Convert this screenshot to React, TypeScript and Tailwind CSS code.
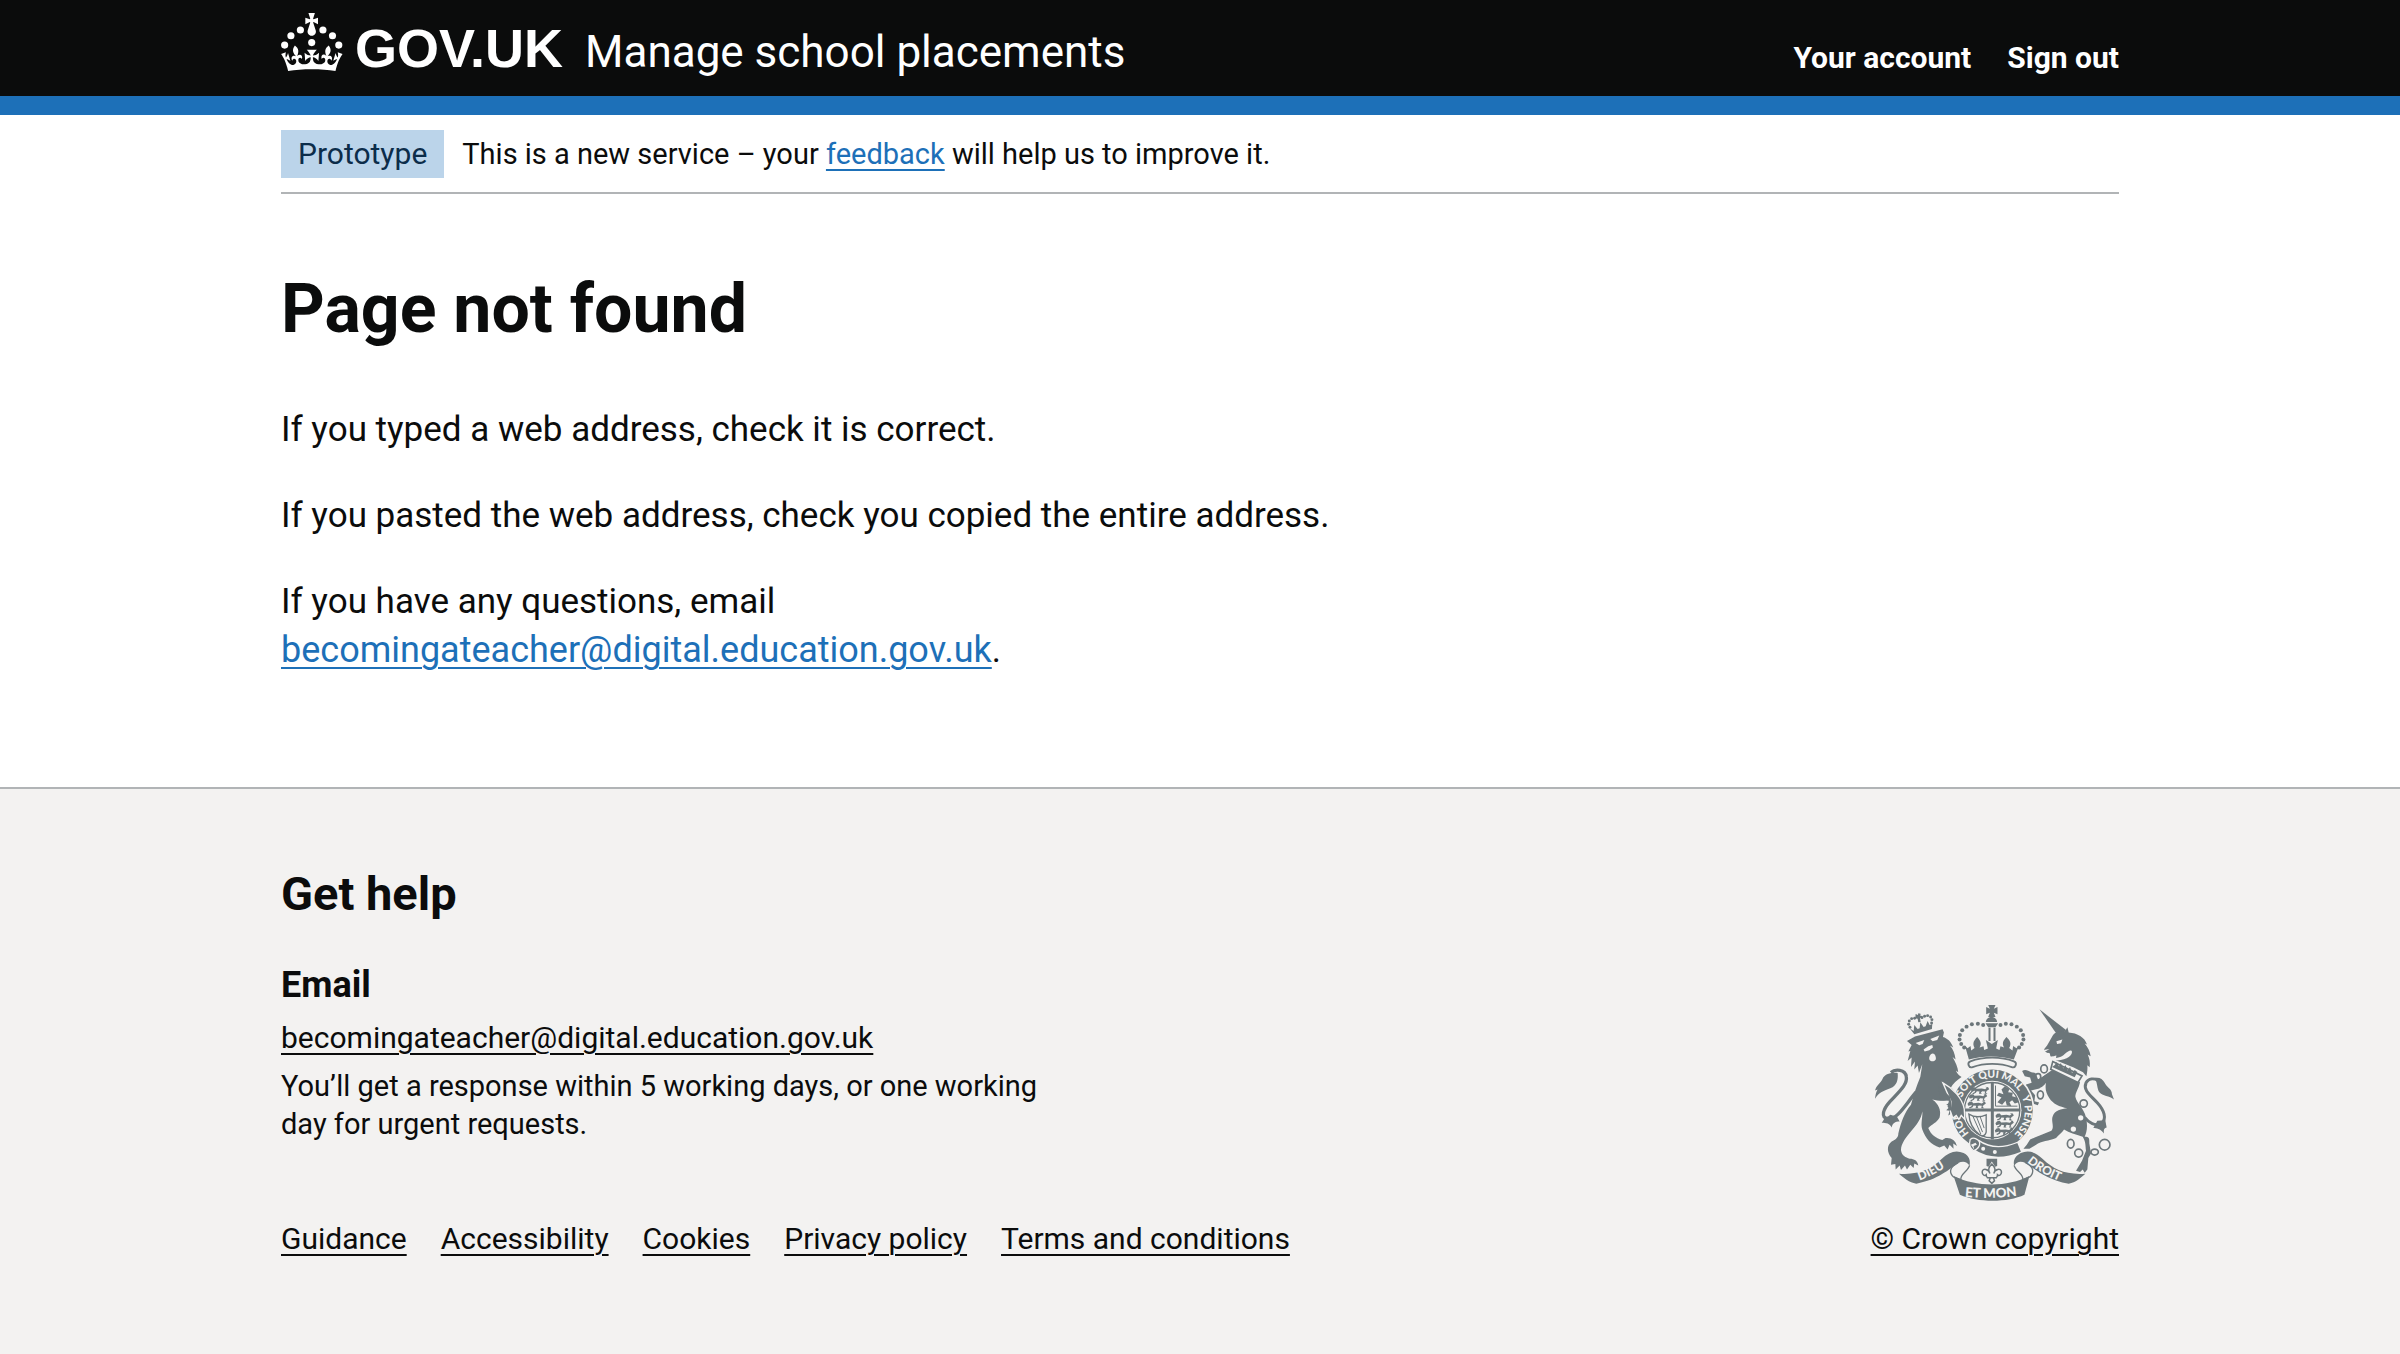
import type { ReactNode } from 'react';

const EMAIL = 'becomingateacher@digital.education.gov.uk';

const accountLinks = ['Your account', 'Sign out'];
const metaLinks = ['Guidance', 'Accessibility', 'Cookies', 'Privacy policy', 'Terms and conditions'];

function Container({ className = '', children }: { className?: string; children: ReactNode }) {
  return <div className={`mx-auto w-full max-w-[1838px] ${className}`}>{children}</div>;
}

function Crown() {
  return (
    <svg viewBox="0 0 64 60" className="h-[58px] w-[62px]" fill="currentColor" aria-hidden="true">
      <circle cx="20" cy="17.6" r="3.7" />
      <circle cx="10.2" cy="23.5" r="3.7" />
      <circle cx="3.7" cy="33.2" r="3.7" />
      <circle cx="31.7" cy="30.6" r="3.7" />
      <circle cx="43.3" cy="17.6" r="3.7" />
      <circle cx="53.2" cy="23.5" r="3.7" />
      <circle cx="59.7" cy="33.2" r="3.7" />
      <path d="M33.1,9.8c.2-.1.3-.3.5-.5l4.6,2.4v-6.8l-4.6,1.5c-.1-.2-.3-.3-.5-.5l1.9-5.9h-6.7l1.9,5.9c-.2.1-.3.3-.5.5l-4.6-1.5v6.8l4.6-2.4c.1.2.3.3.5.5l-2.6,8c-.9,2.8,1.2,5.7,4.1,5.7h0c3,0,5.1-2.9,4.1-5.7l-2.6-8ZM37,37.9s-3.4,3.8-4.1,6.1c2.2,0,4.2-.5,6.4-2.8l-.7,8.5c-2-2.8-4.4-4.1-5.7-3.8.1,3.1.5,6.7,5.8,7.2,3.7.3,6.7-1.5,7-3.8.4-2.6-2-4.3-3.7-1.6-1.4-4.5,2.4-6.1,4.9-3.2-1.9-4.5-1.8-7.7,2.4-10.9,3,4,2.6,7.3-1.2,11.1,2.4-1.3,6.2,0,4,4.6-1.2-2.8-3.7-2.2-4.2.2-.3,1.7.7,3.7,3,4.2,1.9.3,4.7-.9,7-5.9-1.3,0-2.4.7-3.9,1.7l2.4-8c.6,2.3,1.4,3.7,2.2,4.5.6-1.6.5-2.8,0-5.3l5,1.8c-2.6,3.6-5.2,8.7-7.3,17.5-7.4-1.1-15.7-1.7-24.5-1.7h0c-8.8,0-17.1.6-24.5,1.7-2.1-8.9-4.7-13.9-7.3-17.5l5-1.8c-.5,2.5-.6,3.7,0,5.3.8-.8,1.6-2.3,2.2-4.5l2.4,8c-1.5-1-2.6-1.7-3.9-1.7,2.3,5,5.2,6.2,7,5.9,2.3-.4,3.3-2.4,3-4.2-.5-2.4-3-3.1-4.2-.2-2.2-4.6,1.6-6,4-4.6-3.7-3.7-4.2-7.1-1.2-11.1,4.2,3.2,4.3,6.4,2.4,10.9,2.5-2.8,6.3-1.3,4.9,3.2-1.8-2.7-4.1-1-3.7,1.6.3,2.3,3.3,4.1,7,3.8,5.4-.5,5.7-4.2,5.8-7.2-1.3-.2-3.7,1-5.7,3.8l-.7-8.5c2.2,2.3,4.2,2.7,6.4,2.8-.7-2.3-4.1-6.1-4.1-6.1h10.6Z" />
    </svg>
  );
}

const crownPearls = [
  [397, 106], [381, 102], [363, 104], [347, 111], [334, 122], [327, 136], [326, 150], [331, 163], [340, 174],
  [449, 106], [465, 102], [482, 104], [498, 111], [510, 122], [517, 136], [518, 150], [513, 163], [505, 174],
];
const lionCrownPearls = [
  [173, 104], [175, 94], [182, 87], [191, 86], [213, 84], [221, 80], [230, 78], [239, 82], [243, 90], [242, 100],
  [177, 113],
];

/* One walking lion of the royal shield, drawn in a 60 x 20 box. */
function Passant({ x, y }: { x: number; y: number }) {
  return (
    <path
      transform={`translate(${x} ${y})`}
      d="M2 8l5-6 8-1 4 5 16-1 10 2 5-4-5-3 9 1 3 6-7 5-3 5 5 4h-9l2-7-9-1-4 4 3 4h-9l2-7-8-1-3 5-8 4-3-3 7-3 2-5-5 2-6 1z"
    />
  );
}

function RoyalArms() {
  return (
    <svg viewBox="70 43 722 592" className="h-[197px] w-[241px] text-[#6c767a]" fill="currentColor" aria-hidden="true">
      <defs>
        <path id="garter-top" d="M326 362a98 98 0 0 1 196 0a98 98 0 0 1 -196 0" />
        <path id="garter-left" d="M355 431a98 98 0 0 1 -29 -69" />
        <path id="scroll-left" d="M202 574Q260 556 316 508" />
        <path id="scroll-middle" d="M334 621Q424 632 520 616" />
        <path id="scroll-right" d="M526 516Q568 554 650 584" />
      </defs>

      {/* lion's crown */}
      {lionCrownPearls.map(([x, y]) => <circle key={`${x}-${y}`} cx={x} cy={y} r="4.4" />)}
      <path d="M194 73l7 3 1-5 7 1-1 6 7 1-2 6-6-1 2 13-7 1-2-11-7-1z" />
      <path d="M176 116L188 124L190 106L200 118L206 116L208 98L218 112L224 110L230 94L236 106L244 103L243 118L190 134Z" />

      {/* lion */}
      <path d="M168 154L192 141L275 119L279 129L276 142C290 146 301 156 307 174L297 168C306 178 312 192 314 210L305 202C314 218 321 232 322 248L315 243C318 252 324 258 332 262C318 272 306 282 300 294C312 304 330 336 336 362L338 388L330 378L324 388L318 376L308 386L302 372L292 378L296 364L286 362L298 350L286 346L298 338L292 330C280 336 262 334 244 330C262 342 272 362 266 384C258 400 242 404 232 416C240 436 254 446 274 452L284 446C300 444 314 452 318 470L307 462L308 478L296 466L290 480L280 468L266 474C240 466 224 448 214 420C208 404 216 380 214 366C208 412 152 440 150 482C152 500 164 504 176 508C190 508 200 514 202 528L190 522L188 536L178 526L168 540L162 528L150 542L146 528L134 540L133 524L120 526L122 506C108 490 106 468 122 456C134 450 142 444 142 432C150 400 160 370 180 346C188 316 196 290 208 262L214 224L204 250L200 228L190 240L192 216L180 232L182 204L170 214L178 184L172 186L182 166Z" />
      <path
        d="M195 308C160 350 140 388 112 389c-26-4-14-32 4-52 30-32 54-52 50-76-3-22-34-24-46-12"
        fill="none" stroke="currentColor" strokeWidth="10"
      />
      <path d="M140 250c2 20-2 38-22 46-22 8-36 14-46 32 2-16 4-22 8-28l-8 3c4-16 16-22 22-34 8-18 28-20 46-19z" />
      <path d="M118 376c-8 8-14 6-19 2 2 10-1 14-7 22 14 0 24 2 30 14 2-12 10-18 24-18l-8-14z" />
      <g fill="#f3f2f1">
        <path d="M194 160l26-9-5 12-10 4zM238 148l27-10-6 13-14 4z" />
        <path d="M218 180l14-10 12-4 2 8-11 8-14 4zM236 200c3-10 14-12 17-2 4 10 2 16-6 17-9 1-15-5-11-15z" />
      </g>

      {/* unicorn */}
      <path d="M566 59L647 122L624 142Z" />
      <path d="M625 126l18-1c2-4 5-8 7-12l4 16c26 2 48 14 55 36l-7-3c10 12 16 24 18 38l-9-5c6 14 8 24 6 38l-7-6c1 10 0 20-3 33l-10-12-28-14-54-22 2-14c-8 2-13 4-18 2l-2-9c-8-1-14-2-17-12l9-11 18-32c6-6 10-8 18-10z" />
      <path d="M608 239l58 26 22 13c-4 20-14 30-14 44 4 20 26 34 32 62 6 28 2 44-4 58 14 0 14 4 14 20l5 30-8 14-3 34-8 10-6-10-8 8-12-4 18-30 12-30c-2-14 0-26-10-42-22-8-40-12-56-22-6 10-16 16-24 26-20 8-46 10-60 20l-20 12h-18l10-12 10-16 14-6 50-20c10-12-2-30 4-44 6-18 26-22 44-24-24-4-44-14-54-30-10-14-14-30-10-46-8 12-14 12-20 17l-25 6 12 14-2 18 14 4-4 8-18-6-12-14-13-28 8-14 36-12c14-14 34-26 46-34z" />
      <path d="M514 244c8-6 18-2 28 4l12 2 8 20 30-18 6 18-38 22-16-8-6-20-16-4z" />
      <path
        d="M702 384C714 400 734 412 752 402c18-14 8-40-12-62-20-22-44-38-34-60 8-14 24-14 36-8"
        fill="none" stroke="currentColor" strokeWidth="9"
      />
      <path d="M732 266c12-4 24 2 30 14 6 14 22 18 22 34l6 16c-14-12-34-10-44-22-8-12-4-26-14-42z" />
      <path d="M740 394l-12 22c10 0 20 2 32 16-2-14 2-16 8-18l-4-22z" />
      <g fill="#f3f2f1">
        <path d="M617 155l18-5-4 11-12 2zM596 207c20 0 36-4 46-14 12-10 20-14 22-6-2 16-22 26-58 26zM578 181l18-3-12 8z" />
        <path d="M607 213l90 45-13 22-86-41z" />
        <circle cx="690" cy="385" r="8" /><circle cx="668" cy="419" r="8" />
      </g>
      <path d="M612 226l6-9 7 14 5-11 8 17 6-11 7 17 7-11 6 18 8-9 8 6-8 16-68-31z" />
      <g fill="none" stroke="currentColor" strokeWidth="5">
        <path d="M606 216l88 43-12 20-82-40z" />
        <ellipse cx="580" cy="238" rx="10" ry="12" /><ellipse cx="562" cy="262" rx="8" ry="10" />
        <ellipse cx="569" cy="316" rx="9" ry="12" fill="#f3f2f1" />
        <circle cx="699" cy="342" r="11" fill="#f3f2f1" />
        <ellipse cx="660" cy="463" rx="10" ry="13" /><circle cx="684" cy="491" r="12" />
        <ellipse cx="732" cy="488" rx="11" ry="9" /><circle cx="762" cy="466" r="16" />
      </g>

      {/* imperial crown */}
      <path d="M412 46h22l-5 11 11-5v22l-11-5 5 13h-22l5-13-11 5v-22l11 5zM405 97c2-20 32-20 34 0zM404 101h38l-8 12h-22z" />
      <path d="M413 114h6v40h-6zM428 114h6v40h-6z" />
      {crownPearls.map(([x, y]) => <circle key={`${x}-${y}`} cx={x} cy={y} r="6" />)}
      <path d="M342 168l8 8 9-7 2 14 10-8c-8-16 0-24 8-33 9 10 15 19 7 32l12-4 2 11 11-4-6-26 18 12 18-12-5 26 10 4 3-11 11 4c-8-14-2-22 7-32 9 9 17 18 8 33l10 8 2-14 10 7 8-8-16 42c-44-12-92-12-135 0z" />

      {/* garter and shield */}
      <circle cx="424" cy="362" r="127" fill="#f3f2f1" />
      <circle cx="424" cy="362" r="122" />
      <path d="M362 224c36-14 88-14 124 0" fill="none" stroke="currentColor" strokeWidth="24" strokeLinecap="round" />
      <path d="M362 224c36-14 88-14 124 0" fill="none" stroke="#f3f2f1" strokeWidth="13" strokeLinecap="round" />
      <circle cx="424" cy="362" r="88" fill="#f3f2f1" />
      <circle cx="424" cy="362" r="83" fill="none" stroke="currentColor" strokeWidth="4" />
      <path d="M420 278h9v172h-9zM340 357h168v9h-168z" />
      <Passant x={358} y={292} />
      <Passant x={352} y={313} />
      <Passant x={348} y={335} />
      <Passant x={432} y={371} />
      <Passant x={432} y={393} />
      <Passant x={430} y={415} />
      <path d="M440 338l12-14-14-6 6-8 14 4-6-14 10-10 14 8-4 10 14 2-2 10 14 4 6 14-12 4-8-10-8 6 6 12-14-2-4-14-10 12z" />
      <path d="M434 288v62h66" fill="none" stroke="currentColor" strokeWidth="3" />
      <g fill="none" stroke="currentColor" strokeWidth="4">
        <path d="M354 374c16 10 34 10 52 2v52c-4 14-14 14-22 6-18-14-28-34-30-60z" />
        <path d="M366 380l24 54M377 382l18 46M388 382l12 34" strokeWidth="3" />
      </g>
      <path d="M374 466Q430 505 505 474" fill="none" stroke="#f3f2f1" strokeWidth="36" />
      <path d="M374 466Q430 505 505 474" fill="none" stroke="currentColor" strokeWidth="28" />
      <path d="M358 450c10-8 24-2 28 8 2 8-2 16-10 22l-8 4c-10-6-14-20-10-34z" stroke="#f3f2f1" strokeWidth="4" />
      <g fill="#f3f2f1">
        <circle cx="397" cy="478" r="6" />
        <circle cx="432" cy="488" r="6" />
        <path d="M360 466l14-6 4 6-10 4 2 10z" />
      </g>
      <g className="font-['Lato',sans-serif] font-black" fill="#f3f2f1" fontSize="31">
        <text><textPath href="#garter-top" startOffset="38">SOIT QUI MAL</textPath></text>
        <text><textPath href="#garter-top" startOffset="266">Y PENSE</textPath></text>
        <text><textPath href="#garter-left">HON</textPath></text>
      </g>

      {/* lion's foreleg over the garter */}
      <path
        d="M276 280C306 296 334 326 340 358L342 390L331 378L324 390L316 378L306 386L300 370L300 336Z"
        stroke="#f3f2f1" strokeWidth="4"
      />
      <path d="M262 290L298 322L306 372L290 352L294 334L268 332Z" />

      {/* motto scroll */}
      <path d="M144 553c60 4 94-12 128-44 22-22 44-28 66-18 16 8 22 22 18 38-8-14-22-14-34-8-30 20-60 50-126 62-22-4-36-16-52-30z" />
      <path d="M704 553c-60 4-94-12-128-44-22-22-44-28-66-18-16 8-24 22-20 38 8-14 22-14 34-8 32 20 64 50 130 62 22-4 34-16 50-30z" />
      <path d="M308 560c70 34 160 34 228 0l-15 56c-50 24-140 24-194 0z" />
      <g fill="none" stroke="currentColor" strokeWidth="4">
        <path d="M356 528c-4 18-30 26-26 44M322 520c-28 14-28 30-13 44M306 562l26 10" />
        <path d="M490 528c4 18 30 26 26 44M524 520c28 14 26 30 12 44M538 562l-24 10" />
      </g>
      <g className="font-['Lato',sans-serif] font-black" fill="#f3f2f1" fontSize="36">
        <text><textPath href="#scroll-left" startOffset="4">DIEU</textPath></text>
        <text fontSize="40"><textPath href="#scroll-middle" startOffset="8">ET MON</textPath></text>
        <text><textPath href="#scroll-right" startOffset="4">DROIT</textPath></text>
      </g>

      {/* plant badge */}
      <path d="M407 508h32v22l-6 2-10-16-10 16-6-2z" />
      <path
        d="M423 524c12 10 12 18 6 28 2-12 22-18 23-4 0 10-8 12-12 8 0 10-6 10-12 10l3 8-8 8-8-8 3-8c-6 0-12 0-12-10-4 4-12 2-12-8 1-14 21-8 23 4-6-10-6-18 6-28zM408 565h30"
        fill="#f3f2f1" stroke="currentColor" strokeWidth="4.5"
      />
    </svg>
  );
}

export default function App() {
  return (
    <div className="flex min-h-screen flex-col bg-white font-['Roboto','Liberation_Sans',sans-serif] text-[#0b0c0c]">
      <header className="border-b-[19px] border-[#1d70b8] bg-[#0b0c0c] text-white">
        <Container className="flex h-24 items-start justify-between">
          <div className="flex items-start gap-[22px]">
            <a href="#" className="flex items-start gap-3 pt-[13px]" aria-label="GOV.UK">
              <Crown />
              <span className="font-['Liberation_Sans',sans-serif] text-[54px] leading-[70px] font-bold">GOV.UK</span>
            </a>
            <a href="#" className="pt-[23px] text-[44px] leading-[58px]">Manage school placements</a>
          </div>
          <nav className="flex gap-9 pt-[39px] text-[30px] leading-[38px] font-bold" aria-label="Account">
            {accountLinks.map((label) => <a key={label} href="#">{label}</a>)}
          </nav>
        </Container>
      </header>

      <Container>
        <div className="flex items-center gap-[18px] border-b-2 border-[#b1b4b6] pt-[15px] pb-[14px] leading-[38px]">
          <strong className="bg-[#bbd4ea] px-[17px] py-[5px] text-[30px] font-normal text-[#0c2d4a]">Prototype</strong>
          <p className="text-[29px]">
            This is a new service – your{' '}
            <a href="#" className="text-[#1d70b8] underline decoration-2 underline-offset-[5px]">feedback</a>
            {' '}will help us to improve it.
          </p>
        </div>
      </Container>

      <main>
        <Container className="pt-[77px] pb-28">
          <h1 className="mb-[58px] text-[68px] leading-[77px] font-bold">Page not found</h1>
          <div className="flex w-2/3 flex-col gap-[38px] text-[35px] leading-[48px]">
            <p>If you typed a web address, check it is correct.</p>
            <p>If you pasted the web address, check you copied the entire address.</p>
            <p>
              If you have any questions, email<br />
              <a href={`mailto:${EMAIL}`} className="text-[36px] text-[#1d70b8] underline decoration-2 underline-offset-[5px]">{EMAIL}</a>.
            </p>
          </div>
        </Container>
      </main>

      <footer className="grow border-t-2 border-[#b1b4b6] bg-[#f3f2f1] pt-[76px] pb-[76px] leading-[38px]">
        <Container className="flex items-end justify-between">
          <div>
            <h2 className="mb-[38px] text-[47px] leading-[58px] font-bold">Get help</h2>
            <h3 className="mb-[10px] text-[36px] leading-[48px] font-bold">Email</h3>
            <p className="mb-[10px] text-[30px]">
              <a href={`mailto:${EMAIL}`} className="underline decoration-2 underline-offset-[5px]">{EMAIL}</a>
            </p>
            <p className="max-w-[800px] text-[29px]">You’ll get a response within 5 working days, or one working day for urgent requests.</p>
            <ul className="mt-[77px] flex gap-[34px] text-[30px]">
              {metaLinks.map((label) => (
                <li key={label}>
                  <a href="#" className="underline decoration-2 underline-offset-[5px]">{label}</a>
                </li>
              ))}
            </ul>
          </div>
          <a href="#" className="flex flex-col items-center gap-[19px] text-[30px] underline decoration-2 underline-offset-[5px]">
            <RoyalArms />
            <span>© Crown copyright</span>
          </a>
        </Container>
      </footer>
    </div>
  );
}
